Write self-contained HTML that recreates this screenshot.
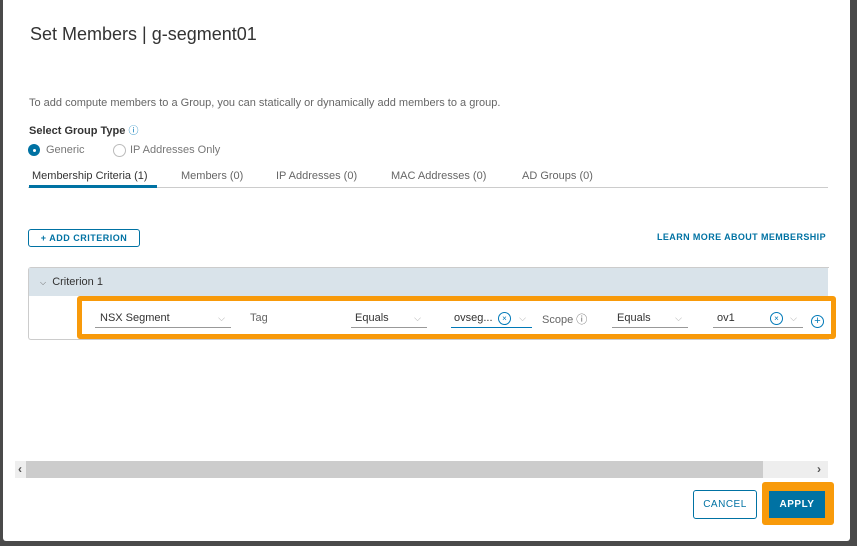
<!DOCTYPE html>
<html><head><style>
body{margin:0;width:857px;height:546px;background:#4a4a4a;font-family:"Liberation Sans",sans-serif;position:relative;overflow:hidden}
.m{position:absolute;left:3px;top:0;width:847px;height:541px;background:#fff;border-radius:0 0 3px 3px}
.a{position:absolute;white-space:nowrap}
.t{font-size:11px;color:#666}
.sel{position:absolute;top:310px;height:17px;border-bottom:1px solid #999;font-size:11px;color:#333;line-height:16px}
.chev{position:absolute;right:6px;top:0;color:#aaa;font-size:9px}
.x{position:absolute;width:11px;height:11px;border:1px solid #0079b8;border-radius:50%;color:#0079b8;font-size:8px;line-height:11px;text-align:center}
</style></head><body>
<div class="m"></div>
<div class="a" style="left:30px;top:24px;font-size:18px;color:#333">Set Members | g-segment01</div>
<div class="a t" style="left:29px;top:97px">To add compute members to a Group, you can statically or dynamically add members to a group.</div>
<div class="a" style="left:29px;top:122px;font-size:11px;color:#333;font-weight:bold">Select Group Type <span style="color:#0079b8;font-weight:normal;font-size:10px">ⓘ</span></div>
<div class="a" style="left:28px;top:144px;width:12px;height:12px;border-radius:50%;background:#0072a3"><div style="position:absolute;left:5px;top:5px;width:3px;height:3px;background:#fff;border-radius:50%"></div></div>
<div class="a t" style="left:46px;top:144px;color:#777">Generic</div>
<div class="a" style="left:113px;top:144px;width:11px;height:11px;border-radius:50%;border:1px solid #bbb"></div>
<div class="a t" style="left:130px;top:144px;color:#777">IP Addresses Only</div>
<div class="a" style="left:28px;top:187px;width:800px;height:1px;background:#ccc"></div>
<div class="a" style="left:29px;top:185px;width:128px;height:3px;background:#0072a3"></div>
<div class="a t" style="left:32px;top:170px;color:#333">Membership Criteria (1)</div>
<div class="a t" style="left:181px;top:170px">Members (0)</div>
<div class="a t" style="left:276px;top:170px">IP Addresses (0)</div>
<div class="a t" style="left:391px;top:170px">MAC Addresses (0)</div>
<div class="a t" style="left:522px;top:170px">AD Groups (0)</div>
<div class="a" style="left:28px;top:229px;width:110px;height:16px;border:1px solid #0072a3;border-radius:3px;color:#0072a3;font-size:9px;font-weight:bold;line-height:16px;text-align:center;letter-spacing:.5px">+ ADD CRITERION</div>
<div class="a" style="left:657px;top:232px;color:#0072a3;font-size:9px;font-weight:bold;letter-spacing:.4px">LEARN MORE ABOUT MEMBERSHIP</div>
<div class="a" style="left:28px;top:267px;width:800px;height:71px;border:1px solid #ccc;border-right:none;border-radius:3px 0 0 3px"></div>
<div class="a" style="left:29px;top:268px;width:799px;height:28px;background:#d9e3ea"></div>
<div class="a" style="left:40px;top:276px;font-size:11px;color:#333"><span style="font-size:8px;color:#666">⌵</span>&nbsp; Criterion 1</div>
<div class="a" style="left:77px;top:296px;width:749px;height:33px;border:5px solid #f89a0a;border-radius:3px"></div>
<div class="sel" style="left:95px;width:136px"><span style="margin-left:5px">NSX Segment</span><span class="chev">⌵</span></div>
<div class="a t" style="left:250px;top:312px;color:#666">Tag</div>
<div class="sel" style="left:351px;width:76px"><span style="margin-left:4px">Equals</span><span class="chev">⌵</span></div>
<div class="sel" style="left:451px;width:81px;border-bottom-color:#0079b8"><span style="margin-left:3px">ovseg...</span><span class="chev">⌵</span></div>
<div class="x" style="left:498px;top:312px">×</div>
<div class="a t" style="left:542px;top:311px">Scope <span style="font-size:11px">ⓘ</span></div>
<div class="sel" style="left:612px;width:76px"><span style="margin-left:5px">Equals</span><span class="chev">⌵</span></div>
<div class="sel" style="left:713px;width:90px"><span style="margin-left:4px">ov1</span><span class="chev">⌵</span></div>
<div class="x" style="left:770px;top:312px">×</div>
<div class="x" style="left:811px;top:315px;font-size:11px">+</div>
<div class="a" style="left:15px;top:461px;width:813px;height:17px;background:#eee"></div>
<div class="a" style="left:26px;top:461px;width:737px;height:17px;background:#ccc"></div>
<div class="a" style="left:18px;top:462px;font-size:12px;color:#555;font-weight:bold">‹</div>
<div class="a" style="left:817px;top:462px;font-size:12px;color:#555;font-weight:bold">›</div>
<div class="a" style="left:693px;top:490px;width:62px;height:27px;border:1px solid #0072a3;border-radius:3px;color:#0072a3;font-size:10px;line-height:28px;text-align:center;letter-spacing:.5px">CANCEL</div>
<div class="a" style="left:762px;top:482px;width:72px;height:43px;background:#f89a0a;border-radius:3px"></div>
<div class="a" style="left:769px;top:491px;width:56px;height:27px;background:#0072a3;color:#fff;font-size:10px;line-height:28px;text-align:center;font-weight:bold;letter-spacing:.5px">APPLY</div>
</body></html>
